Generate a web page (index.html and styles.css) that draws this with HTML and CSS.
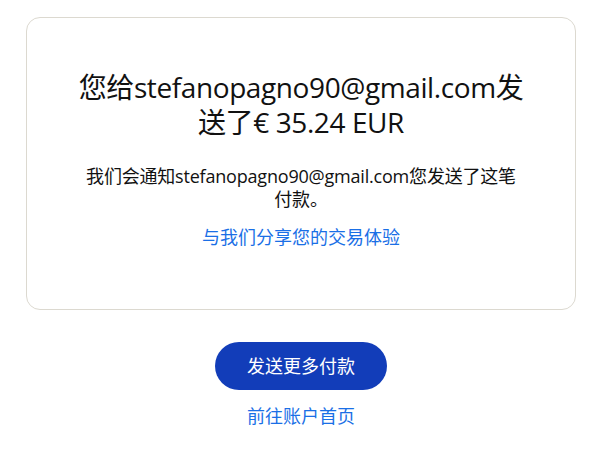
FILE: index.html
```html
<!DOCTYPE html>
<html lang="zh-CN">
<head>
    <meta charset="UTF-8">
    <meta name="viewport" content="width=device-width, initial-scale=1.0">
    <title>付款已发送</title>
    <link rel="stylesheet" href="styles.css">
</head>
<body>
    <!-- 结果卡片 -->
    <div class="card">
        <h1 class="title">您给stefanopagno90@gmail.com发送了€ 35.24 EUR</h1>
        <p class="note">我们会通知stefanopagno90@gmail.com您发送了这笔付款。</p>
        <a class="link" href="#">与我们分享您的交易体验</a>
    </div>

    <!-- 底部操作 -->
    <div class="actions">
        <a class="btn" href="#">发送更多付款</a>
        <a class="link" href="#">前往账户首页</a>
    </div>
</body>
</html>
```

FILE: styles.css
```css
body
{
    margin: 0;
    padding: 0;
    background-color: #fff;
    color: #111;
    font-family: "Open Sans", "Noto Sans CJK SC", sans-serif;
}

/* 卡片 */
.card
{
    margin: 17px 20px 0 26px;
    padding: 52px 0 60px;
    border: 1px solid #dcd9d0;
    border-radius: 14px;
    display: flex;
    flex-direction: column;
    align-items: center;
    text-align: center;
}

.title
{
    width: 450px;
    margin: 0;
    font-size: 28px;
    font-weight: 400;
    letter-spacing: -0.4px;
    line-height: 35px;
}

.note
{
    width: 440px;
    margin: 25px 0 14px;
    font-size: 18px;
    letter-spacing: -0.2px;
    line-height: 23px;
}

.link
{
    color: #1a6fe6;
    text-decoration: none;
    font-size: 18px;
    line-height: 24px;
}

/* 按钮区域 */
.actions
{
    margin: 0 20px 0 26px;
    display: flex;
    flex-direction: column;
    align-items: center;
    padding-top: 32px;
    gap: 14px;
}

.btn
{
    width: 172px;
    height: 48px;
    line-height: 48px;
    border-radius: 24px;
    background-color: #123db9;
    color: #fff;
    text-align: center;
    text-decoration: none;
    font-size: 18px;
}
```
